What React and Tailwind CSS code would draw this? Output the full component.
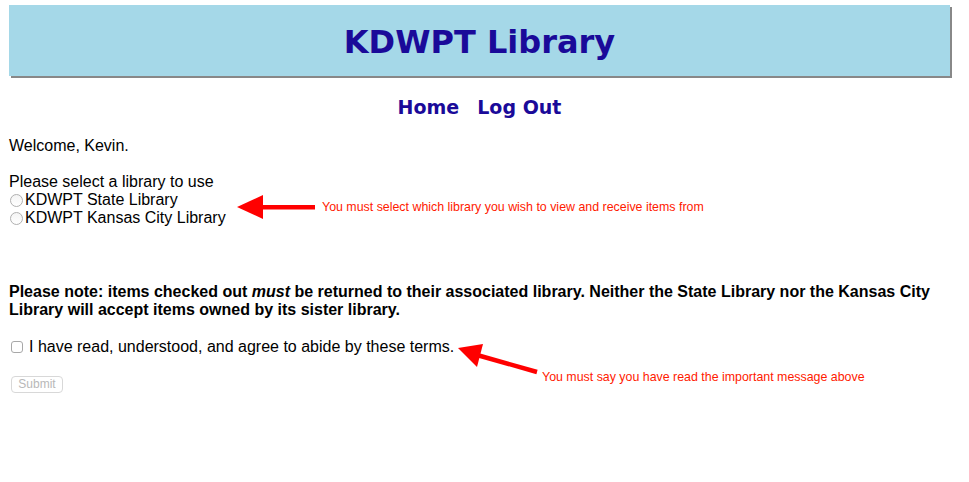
export default function App() {
  return (
    <div className="relative min-h-[482px] w-[969px] bg-white text-black" style={{ fontFamily: '"Liberation Sans", Arial, sans-serif' }}>
      <div className="pt-[5px] pl-[9px]">
        <div className="flex h-[71px] w-[941px] items-center justify-center bg-[#a5d8e8] pt-[2px] shadow-[2px_2px_0_0_#888888]">
          <h1 className="text-[32px] font-bold text-[#1a0a99]" style={{ fontFamily: '"DejaVu Sans", Verdana, sans-serif' }}>
            KDWPT Library
          </h1>
        </div>
      </div>

      <nav className="mt-[20px] flex h-[22px] items-center justify-center gap-[18px] pr-[10px] text-[19px] font-bold leading-[22px] text-[#1a0a99]" style={{ fontFamily: '"DejaVu Sans", Verdana, sans-serif' }}>
        <a href="#">Home</a>
        <a href="#">Log Out</a>
      </nav>

      <div className="px-[9px] text-[16px] leading-[18px]">
        <p className="mt-[19px]">Welcome, Kevin.</p>

        <div className="relative mt-[18px]">
          <p>Please select a library to use</p>
          <label className="flex items-center">
            <span className="mr-[2px] ml-[1px] inline-block h-[13px] w-[13px] rounded-full border border-[#b0b0b0] bg-gradient-to-b from-[#f4f4f4] to-white"></span>
            KDWPT State Library
          </label>
          <label className="flex items-center">
            <span className="mr-[2px] ml-[1px] inline-block h-[13px] w-[13px] rounded-full border border-[#b0b0b0] bg-gradient-to-b from-[#f4f4f4] to-white"></span>
            KDWPT Kansas City Library
          </label>

          <div className="absolute left-[228px] top-[21px] flex items-center">
            <svg width="80" height="26" viewBox="0 0 80 26" className="block">
              <polygon points="0,13 26,1 26,25" fill="#ff0000" />
              <rect x="24" y="11" width="54" height="4.5" fill="#ff0000" />
            </svg>
            <span className="ml-[5px] text-[12.4px] text-[#ff1a00]">You must select which library you wish to view and receive items from</span>
          </div>
        </div>

        <p className="mt-[56px] font-bold">
          Please note: items checked out <i>must</i> be returned to their associated library. Neither the State Library nor the Kansas City Library will accept items owned by its sister library.
        </p>

        <div className="relative mt-[19px]">
          <label className="flex items-center">
            <span className="mr-[6px] ml-[2px] inline-block h-[12px] w-[12px] rounded-[3px] border border-[#a8a8a8] bg-white"></span>
            I have read, understood, and agree to abide by these terms.
          </label>
        </div>

        <button disabled className="mt-[20px] ml-[2px] h-[17px] w-[52px] rounded-[4px] border border-[#d8d8d8] bg-white text-[12px] leading-[15px] text-[#b8b8b8]">
          Submit
        </button>
      </div>

      <svg width="90" height="40" viewBox="0 0 90 40" className="absolute left-[455px] top-[335px]">
        <polygon points="3,13 28,9 22,32" fill="#ff0000" />
        <line x1="22" y1="20" x2="82" y2="37" stroke="#ff0000" strokeWidth="4.5" />
      </svg>
      <span className="absolute left-[542px] top-[368px] text-[12.4px] leading-[18px] text-[#ff1a00]">You must say you have read the important message above</span>
    </div>
  );
}
